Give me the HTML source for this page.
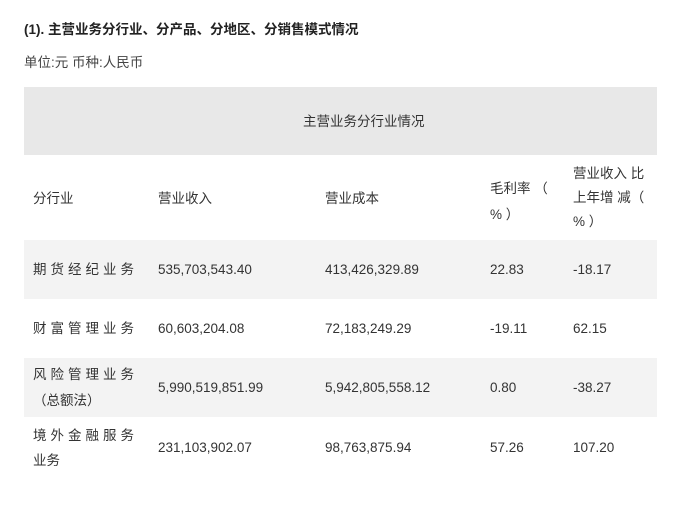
<!DOCTYPE html>
<html><head><meta charset="utf-8"><style>
*{margin:0;padding:0;box-sizing:border-box}
body{width:677px;height:517px;background:#fff;position:relative;overflow:hidden;font-family:"Liberation Sans","Noto Sans CJK SC",sans-serif;color:#333;font-size:13.5px}
.a{position:absolute;white-space:nowrap;line-height:18px}
.bg{position:absolute;left:24px;width:633px}
.sp{letter-spacing:4px}
</style></head><body>
<div class="a" style="left:24px;top:21px;font-weight:bold;font-size:13.5px;color:#222">(1). 主营业务分行业、分产品、分地区、分销售模式情况</div>
<div class="a" style="left:24px;top:54px;color:#444">单位:元 币种:人民币</div>
<div class="bg" style="top:87px;height:68px;background:#e8e8e8"></div>
<div class="bg" style="top:240px;height:59px;background:#f3f3f3"></div>
<div class="bg" style="top:358px;height:59px;background:#f3f3f3"></div>
<div class="a" style="left:303px;top:113px">主营业务分行业情况</div>
<div class="a" style="left:33px;top:190px">分行业</div>
<div class="a" style="left:158px;top:190px">营业收入</div>
<div class="a" style="left:325px;top:190px">营业成本</div>
<div class="a" style="left:490px;top:176px;line-height:26px">毛利率 （<br>% ）</div>
<div class="a" style="left:573px;top:162px;line-height:24px">营业收入 比<br>上年增 减（<br>% ）</div>

<div class="a sp" style="left:33px;top:261px">期货经纪业务</div>
<div class="a" style="left:158px;top:261px">535,703,543.40</div>
<div class="a" style="left:325px;top:261px">413,426,329.89</div>
<div class="a" style="left:490px;top:261px">22.83</div>
<div class="a" style="left:573px;top:261px">-18.17</div>

<div class="a sp" style="left:33px;top:320px">财富管理业务</div>
<div class="a" style="left:158px;top:320px">60,603,204.08</div>
<div class="a" style="left:325px;top:320px">72,183,249.29</div>
<div class="a" style="left:490px;top:320px">-19.11</div>
<div class="a" style="left:573px;top:320px">62.15</div>

<div class="a sp" style="left:33px;top:366px">风险管理业务</div>
<div class="a" style="left:33px;top:392px">（总额法）</div>
<div class="a" style="left:158px;top:379px">5,990,519,851.99</div>
<div class="a" style="left:325px;top:379px">5,942,805,558.12</div>
<div class="a" style="left:490px;top:379px">0.80</div>
<div class="a" style="left:573px;top:379px">-38.27</div>

<div class="a sp" style="left:33px;top:427px">境外金融服务</div>
<div class="a" style="left:33px;top:452px">业务</div>
<div class="a" style="left:158px;top:439px">231,103,902.07</div>
<div class="a" style="left:325px;top:439px">98,763,875.94</div>
<div class="a" style="left:490px;top:439px">57.26</div>
<div class="a" style="left:573px;top:439px">107.20</div>
</body></html>
